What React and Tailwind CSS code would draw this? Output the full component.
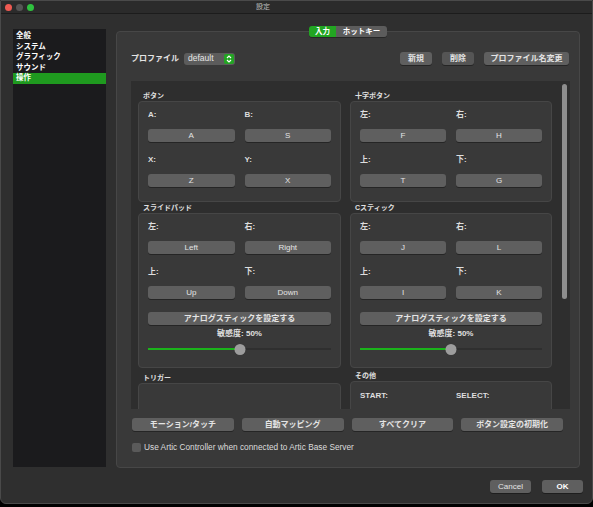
import React from "react";

const Btn = ({ children, className = "" }) => (
  <div
    className={`h-[13px] flex items-center justify-center rounded-[3px] bg-[#5f5f5f] text-[8px] text-[#e4e4e4] shadow-[0_1px_0_rgba(0,0,0,0.35)] ${className}`}
  >
    {children}
  </div>
);

const Label = ({ children }) => (
  <div className="h-[10px] leading-[10px] text-[8px] font-bold text-[#dedede]">{children}</div>
);

const Group = ({ title, children, className = "" }) => (
  <div className={className}>
    <div className="h-[10px] leading-[10px] pl-[5px] text-[7px] font-bold text-[#e0e0e0]">{title}</div>
    <div className="rounded-[4px] border border-[#464646] bg-[#393939] px-[9px]">{children}</div>
  </div>
);

const FourKeys = ({ labels, keys }) => (
  <div className="grid grid-cols-2 gap-x-[10px]">
    <div className="mt-[8px]"><Label>{labels[0]}</Label></div>
    <div className="mt-[8px]"><Label>{labels[1]}</Label></div>
    <Btn className="mt-[9px]">{keys[0]}</Btn>
    <Btn className="mt-[9px]">{keys[1]}</Btn>
    <div className="mt-[13px]"><Label>{labels[2]}</Label></div>
    <div className="mt-[13px]"><Label>{labels[3]}</Label></div>
    <Btn className="mt-[9px]">{keys[2]}</Btn>
    <Btn className="mt-[9px]">{keys[3]}</Btn>
  </div>
);

const Slider = () => (
  <div className="mt-[4px] pb-[12px]">
    <div className="text-center text-[8px] leading-[10px] font-bold text-[#e0e0e0]">敏感度: 50%</div>
    <div className="relative h-[12px] mt-[4px] flex items-center">
      <div className="flex-1 h-[2px] bg-[#2f2f2f]">
        <div className="h-[2px] w-1/2 bg-[#1bb31b]" />
      </div>
      <div className="absolute left-1/2 -translate-x-1/2 top-[0.5px] w-[11px] h-[11px] rounded-full bg-[#9d9d9d]" />
    </div>
  </div>
);

const StickGroup = ({ title, keys }) => (
  <Group title={title}>
    <FourKeys labels={["左:", "右:", "上:", "下:"]} keys={keys} />
    <Btn className="mt-[13px] font-bold">アナログスティックを設定する</Btn>
    <Slider />
  </Group>
);

export default function App() {
  const side = ["全般", "システム", "グラフィック", "サウンド", "操作"];
  return (
    <div className="w-[593px] h-[507px] bg-black font-['Liberation_Sans','Noto_Sans_CJK_JP',sans-serif]">
      <div className="h-[504px] rounded-b-[6px] border border-[#4a4a4a] bg-[#2f2f2f] flex flex-col overflow-hidden">
        {/* title bar */}
        <div className="h-[13px] shrink-0 bg-[#2b2b2b] border-b border-[#1c1c1c] flex items-center pl-[4px]">
          <div className="flex gap-[4px]">
            <div className="w-[7px] h-[7px] rounded-full bg-[#ee5a52]" />
            <div className="w-[7px] h-[7px] rounded-full bg-[#555555]" />
            <div className="w-[7px] h-[7px] rounded-full bg-[#2fc23f]" />
          </div>
          <div className="ml-[222px] text-[7px] text-[#bdbdbd]">設定</div>
        </div>

        <div className="flex flex-1 pl-[12px] pr-[12px] pt-[12px]">
          {/* sidebar */}
          <div className="w-[93px] shrink-0 h-[438px] mt-[3px] bg-[#1b1b1d] pt-[2px]">
            {side.map((s, i) => (
              <div
                key={s}
                className={`h-[10.5px] leading-[10.5px] pl-[3px] text-[7.5px] font-bold text-white ${i === 4 ? "bg-[#1f9a1f]" : ""}`}
              >
                {s}
              </div>
            ))}
          </div>

          {/* right panel */}
          <div className="ml-[10px] w-[464px] shrink-0 flex flex-col">
            <div className="relative z-10 flex justify-center h-[11px]">
              <div className="flex rounded-[3px] overflow-hidden text-[7.5px] font-bold text-white shadow-[0_1px_0_rgba(0,0,0,0.3)]">
                <div className="w-[27px] bg-[#22a522] flex items-center justify-center">入力</div>
                <div className="w-[51px] bg-[#5c5c5c] flex items-center justify-center">ホットキー</div>
              </div>
            </div>
            <div className="-mt-[6px] h-[437px] rounded-[4px] border border-[#474747] bg-[#393939] pl-[14px] pr-[9px] pt-[20px]">
              {/* profile row */}
              <div className="flex items-center h-[13px]">
                <div className="text-[8px] font-bold text-[#e4e4e4]">プロファイル</div>
                <div className="ml-[5px] w-[51px] h-[12px] rounded-[3px] bg-[#5c5c5c] flex items-center justify-between pl-[4px] pr-[1px]">
                  <span className="text-[8.5px] text-[#e6e6e6]">default</span>
                  <span className="w-[10px] h-[10px] rounded-[2px] bg-[#22a522] flex items-center justify-center">
                    <svg width="6" height="8" viewBox="0 0 6 8" fill="none" stroke="white" strokeWidth="1.2">
                      <path d="M1 3l2-2 2 2M1 5l2 2 2-2" />
                    </svg>
                  </span>
                </div>
                <div className="flex-1" />
                <Btn className="w-[32px] font-bold">新規</Btn>
                <Btn className="w-[32px] ml-[10px] font-bold text-[#7a7a7a] bg-[#555555]">削除</Btn>
                <Btn className="w-[85px] ml-[10px] mr-[1px] font-bold">プロファイル名変更</Btn>
              </div>

              {/* scroll area */}
              <div className="mt-[16px] w-[439px] h-[328px] bg-[#2e2e2e] flex overflow-hidden">
                <div className="grid grid-cols-[203px_202px] gap-x-[9px] content-start pl-[7px] pt-[10px]">
                  <Group title="ボタン">
                    <FourKeys labels={["A:", "B:", "X:", "Y:"]} keys={["A", "S", "Z", "X"]} />
                    <div className="h-[14px]" />
                  </Group>
                  <Group title="十字ボタン">
                    <FourKeys labels={["左:", "右:", "上:", "下:"]} keys={["F", "H", "T", "G"]} />
                    <div className="h-[14px]" />
                  </Group>
                  <div className="mt-[1px]"><StickGroup title="スライドパッド" keys={["Left", "Right", "Up", "Down"]} /></div>
                  <div className="mt-[1px]"><StickGroup title="Cスティック" keys={["J", "L", "I", "K"]} /></div>
                  <Group title="トリガー" className="mt-[5px]">
                    <div className="h-[40px]" />
                  </Group>
                  <Group title="その他" className="mt-[3px]">
                    <div className="grid grid-cols-2 gap-x-[10px]">
                      <div className="mt-[9px]"><Label>START:</Label></div>
                      <div className="mt-[9px]"><Label>SELECT:</Label></div>
                      <Btn className="mt-[9px]">&nbsp;</Btn>
                      <Btn className="mt-[9px]">&nbsp;</Btn>
                    </div>
                  </Group>
                </div>
                <div className="flex-1 pt-[3px] pl-[10px]">
                  <div className="w-[5px] h-[215px] rounded-full bg-[#8d8d8d]" />
                </div>
              </div>

              {/* bottom buttons */}
              <div className="mt-[9px] flex gap-[8px] w-[431px] ml-[1px]">
                <Btn className="flex-1 font-bold">モーション/タッチ</Btn>
                <Btn className="flex-1 font-bold">自動マッピング</Btn>
                <Btn className="flex-1 font-bold">すべてクリア</Btn>
                <Btn className="flex-1 font-bold">ボタン設定の初期化</Btn>
              </div>
              <div className="mt-[10px] ml-[1px] flex items-center gap-[3px]">
                <div className="w-[9px] h-[9px] rounded-[2px] bg-[#5a5a5a]" />
                <span className="text-[8.3px] text-[#dcdcdc]">Use Artic Controller when connected to Artic Base Server</span>
              </div>
            </div>

            {/* dialog buttons */}
            <div className="flex justify-end gap-[11px] mt-[12px] -mr-[3px]">
              <Btn className="w-[41px] text-[8.5px]">Cancel</Btn>
              <Btn className="w-[41px] text-[8.5px] font-bold bg-[#1fb31f] text-white">OK</Btn>
            </div>
          </div>
        </div>
      </div>
    </div>
  );
}
